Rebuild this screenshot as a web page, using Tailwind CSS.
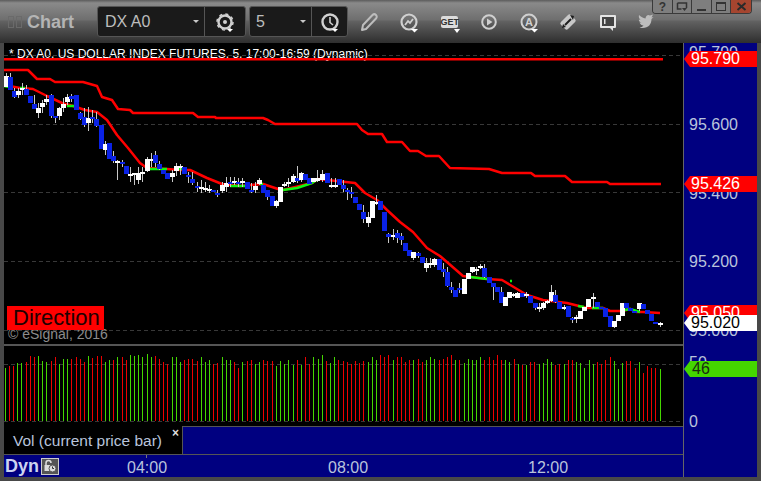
<!DOCTYPE html>
<html lang="en">
<head>
<meta charset="utf-8">
<title>Chart</title>
<script src="https://cdn.jsdelivr.net/npm/@tailwindcss/browser@4"></script>
</head>
<body class="m-0 overflow-hidden bg-[#484848] font-['Liberation_Sans',sans-serif]">
<div class="flex h-[481px] w-[761px] flex-col overflow-hidden bg-[#484848]">

  <!-- title bar -->
  <header class="relative flex h-[43px] shrink-0 items-center bg-[linear-gradient(#5c5c5c_0px,#8a8a8a_3px,#6e6e6e_20px,#626262_21px,#2e2e2e_43px)]">
    <div class="ml-[8px] flex w-[89px] items-center">
      <span class="h-[12px] w-[6px] border border-[#6a6a6a]"></span>
      <span class="ml-[2px] h-[12px] w-[6px] border border-[#6a6a6a]"></span>
      <span class="ml-[5px] text-[18px] font-bold leading-[20px] text-[#b4b4b4]">Chart</span>
    </div>
    <div class="flex h-[31px] w-[149px] items-center rounded-[3px] border border-[#555] bg-[#1a1a1a]">
      <span class="w-[95px] pl-[7px] text-[16px] text-[#bdbdbd]">DX A0</span>
      <span class="h-0 w-0 border-x-[3px] border-t-[3px] border-x-transparent border-t-[#c8c8c8]"></span>
      <span class="ml-[5px] flex h-full w-[40px] items-center justify-center border-l border-[#555]">
        <svg width="24" height="24" viewBox="0 0 24 24"><circle cx="12" cy="12" r="6.5" fill="none" stroke="#d0d0d0" stroke-width="2.4"/><circle cx="12" cy="12" r="8" fill="none" stroke="#d0d0d0" stroke-width="1.5" stroke-dasharray="3 3.3"/><circle cx="12" cy="12" r="2" fill="#d0d0d0"/><path d="M14 19h6l-3 3z" fill="#fff"/></svg>
      </span>
    </div>
    <div class="ml-[3px] flex h-[31px] w-[99px] items-center rounded-[3px] border border-[#555] bg-[#1a1a1a]">
      <span class="w-[51px] pl-[6px] text-[16px] text-[#bdbdbd]">5</span>
      <span class="h-0 w-0 border-x-[3px] border-t-[3px] border-x-transparent border-t-[#c8c8c8]"></span>
      <span class="ml-[5px] flex h-full w-[36px] items-center justify-center border-l border-[#555]">
        <svg width="24" height="24" viewBox="0 0 24 24"><circle cx="12" cy="12" r="7.5" fill="none" stroke="#d0d0d0" stroke-width="2.4"/><path d="M12 7v5.5l3 2.5" fill="none" stroke="#d0d0d0" stroke-width="1.6"/><path d="M14 19h6l-3 3z" fill="#fff"/></svg>
      </span>
    </div>
    <nav class="ml-[1px] flex items-center">
      <span class="flex h-[24px] w-[40px] items-center justify-center"><svg width="24" height="24" viewBox="0 0 24 24"><path d="M5 20l1-5L15.500 5c1-1 2.500-1 3.500 0s1 2.500 0 3.500L9 19z" fill="none" stroke="#bdbdbd" stroke-width="2" stroke-linejoin="round"/></svg></span>
      <span class="flex h-[24px] w-[40px] items-center justify-center"><svg width="24" height="24" viewBox="0 0 24 24"><circle cx="12" cy="12" r="7.500" fill="none" stroke="#d0d0d0" stroke-width="2.200"/><path d="M8 15l3-4 2 2 3-4" fill="none" stroke="#d0d0d0" stroke-width="1.800"/><path d="M14 19h7l-3.500 3.500z" fill="#fff"/></svg></span>
      <span class="relative flex h-[24px] w-[40px] items-center justify-center"><span class="h-[12px] w-[17px] rounded-[2px] bg-[#dcdcdc] text-center text-[9px] font-bold leading-[12px] text-[#333]">GET</span><span class="absolute left-[25px] top-[19px] h-0 w-0 border-x-[3.500px] border-t-[4px] border-x-transparent border-t-white"></span></span>
      <span class="flex h-[24px] w-[40px] items-center justify-center"><svg width="24" height="24" viewBox="0 0 24 24"><circle cx="12" cy="12" r="6.800" fill="none" stroke="#d0d0d0" stroke-width="2"/><path d="M10 8.500v7l5.500-3.500z" fill="#d0d0d0"/></svg></span>
      <span class="relative flex h-[24px] w-[40px] items-center justify-center"><svg width="24" height="24" viewBox="0 0 24 24"><circle cx="12" cy="12" r="7.500" fill="none" stroke="#d0d0d0" stroke-width="2"/><path d="M14 19h7l-3.500 3.500z" fill="#fff"/></svg><span class="absolute left-0 top-[5px] w-full text-center text-[11px] font-bold leading-[14px] text-[#d0d0d0]">A</span></span>
      <span class="flex h-[24px] w-[38px] items-center justify-center"><svg width="24" height="24" viewBox="0 0 24 24"><rect x="5" y="7" width="14" height="10" rx="2" transform="rotate(-45 12 12)" fill="#c8c8c8"/><path d="M14 5l4 1-1 4zM7 14l-1 4 4-1z" fill="#1e1e1e"/><path d="M9 15l6-6" stroke="#1e1e1e" stroke-width="2"/></svg></span>
      <span class="flex h-[24px] w-[42px] items-center justify-center"><svg width="24" height="24" viewBox="0 0 24 24"><path d="M5 5h14a1 1 0 0 1 1 1v11a1 1 0 0 1-1 1h-2v3l-3-3H5a1 1 0 0 1-1-1V6a1 1 0 0 1 1-1z" fill="#e4e4e4"/><rect x="6" y="7" width="12" height="9" fill="#444"/><rect x="8" y="9" width="1.500" height="5" fill="#e4e4e4"/></svg></span>
      <span class="flex h-[24px] w-[34px] items-center justify-center"><svg width="24" height="24" viewBox="0 0 24 24"><path d="M5 5c2 2 4 3 6.500 3.500C11.500 6 14 4 16 5.500l3-1-1.500 3 2-.5-2 2c0 5-3 9-9 9-1 0-2 0-3-.5 2 0 3-1 4-2-2 0-3-1-4-3h2C5 12 4.500 10 5 9.500l1.500.5C5 8.500 4.500 7 5 5z" fill="#bdbdbd"/></svg></span>
    </nav>
    <div class="absolute right-[9px] top-0 flex h-[14px] w-[100px] overflow-hidden rounded-b-[4px] border border-t-0 border-[#3a3a3a] text-[#333]">
      <span class="flex w-[20px] items-center justify-center border-r border-[#3a3a3a] bg-[#7e7e7e] text-[12px] font-bold leading-none">?</span>
      <span class="flex w-[20px] items-center justify-center border-r border-[#3a3a3a] bg-[#7e7e7e]"><svg width="12" height="10" viewBox="0 0 12 10"><path d="M1.500 1h9v5M1.500 1v6h4" fill="none" stroke="#333" stroke-width="1.500"/><path d="M6 6h5l-2.500 3z" fill="#333"/></svg></span>
      <span class="flex w-[20px] items-end justify-center border-r border-[#3a3a3a] bg-[#7e7e7e] pb-[2px]"><span class="h-[2px] w-[9px] bg-[#333]"></span></span>
      <span class="flex w-[20px] items-center justify-center border-r border-[#3a3a3a] bg-[#7e7e7e]"><span class="h-[9px] w-[10px] border border-t-2 border-[#333]"></span></span>
      <span class="flex w-[20px] items-center justify-center bg-[#a5452f]"><svg width="11" height="9" viewBox="0 0 11 9"><path d="M1.500 1l8 7M9.500 1l-8 7" stroke="#2a2a2a" stroke-width="2"/></svg></span>
    </div>
  </header>

  <main class="flex min-h-0 flex-1 pb-[4px] pl-[4px] pr-[4px]">
    <section class="flex w-[679px] flex-col">
      <!-- price pane -->
      <div class="relative h-[301px] shrink-0 bg-black">
        <p class="absolute left-[5px] top-[4px] whitespace-nowrap text-[12px] leading-[14px] text-white">* DX A0, US DOLLAR INDEX FUTURES, 5, 17:00-16:59 (Dynamic)</p>
        <svg id="price" class="absolute left-0 top-0" width="679" height="301" viewBox="4 43 679 301"></svg>
        <p class="absolute left-[4px] top-[283px] whitespace-nowrap text-[14px] leading-[16px] text-[#8c8c8c]">© eSignal, 2016</p>
        <p class="absolute left-[3px] top-[263px] h-[24px] w-[97px] overflow-hidden whitespace-nowrap bg-[#ff0000] pl-[6px] text-[22px] leading-[24px] text-[#200000]">Direction</p>
      </div>
      <div class="h-[2px] shrink-0 bg-[#555]"></div>
      <!-- volume pane -->
      <div class="h-[80px] shrink-0 bg-black">
        <svg id="vol" class="block" width="679" height="80" viewBox="4 346 679 80"></svg>
      </div>
      <!-- tab row -->
      <div class="flex h-[29px] shrink-0 border-b border-[#555] bg-black">
        <div class="relative w-[178px] border-t border-black pl-[9px] pt-[4px] text-[15.500px] leading-[20px] text-[#b9c4dc]">Vol (current price bar)<span class="absolute left-[168px] top-[-1px] text-[12px] font-bold leading-[14px] text-[#ddd]">×</span></div>
        <div class="flex-1 border-l border-t border-[#555] bg-[#000080]"></div>
      </div>
      <!-- time axis -->
      <div class="relative flex flex-1 items-center bg-[#000080]">
        <span class="ml-[1px] text-[18px] font-bold leading-[20px] text-[#ccd4f0]">Dyn</span>
        <span class="ml-[2px] flex h-[17px] w-[18px] items-center justify-center border border-[#ccc] bg-[#555]"><svg width="14" height="14" viewBox="0 0 14 14"><path d="M3 6V4a2.500 2.500 0 0 1 5 0" fill="none" stroke="#ddd" stroke-width="1.500"/><rect x="1.500" y="6" width="7" height="6" fill="#ddd"/><circle cx="9.500" cy="9.500" r="3.500" fill="#ddd" stroke="#555"/><path d="M9.500 7.500v2h1.500" fill="none" stroke="#333"/></svg></span>
        <span class="absolute left-[142px] top-0 h-[3px] w-px bg-[#777]"></span>
        <span class="absolute left-[123px] top-[3px] w-[40px] text-center text-[16px] leading-[20px] text-[#b9c4dc]">04:00</span>
        <span class="absolute left-[324px] top-[3px] w-[40px] text-center text-[16px] leading-[20px] text-[#b9c4dc]">08:00</span>
        <span class="absolute left-[524px] top-[3px] w-[40px] text-center text-[16px] leading-[20px] text-[#b9c4dc]">12:00</span>
      </div>
    </section>

    <!-- price axis -->
    <aside class="relative w-[74px] shrink-0 border-l border-[#666] bg-[#000080] text-[16px] leading-[16px] text-[#b9c4dc]">
      <span class="absolute left-[5px] top-[2px]">95.790</span>
      <span class="absolute left-[5px] top-[74px]">95.600</span>
      <span class="absolute left-[5px] top-[143px]">95.400</span>
      <span class="absolute left-[5px] top-[211px]">95.200</span>
      <span class="absolute left-[5px] top-[280px]">95.000</span>
      <span class="absolute left-[5px] top-[312px]">50</span>
      <span class="absolute left-[5px] top-[371px]">0</span>
      <span class="absolute left-0 top-[8px] h-[16px] w-[73px] bg-[#ff0000] pl-[7px] text-white [clip-path:polygon(0_50%,6px_0,100%_0,100%_100%,6px_100%)]">95.790</span>
      <span class="absolute left-0 top-[133px] h-[16px] w-[73px] bg-[#ff0000] pl-[7px] text-white [clip-path:polygon(0_50%,6px_0,100%_0,100%_100%,6px_100%)]">95.426</span>
      <span class="absolute left-0 top-[262px] h-[16px] w-[73px] bg-[#ff0000] pl-[7px] text-white [clip-path:polygon(0_50%,6px_0,100%_0,100%_100%,6px_100%)]">95.050</span>
      <span class="absolute left-0 top-[272px] h-[16px] w-[73px] bg-white pl-[7px] text-black [clip-path:polygon(0_50%,6px_0,100%_0,100%_100%,6px_100%)]">95.020</span>
      <span class="absolute left-0 top-[318px] h-[16px] w-[73px] bg-[#44d600] pl-[8px] text-[#1a2a10] [clip-path:polygon(0_50%,6px_0,100%_0,100%_100%,6px_100%)]">46</span>
    </aside>
  </main>
</div>

<script>
const GRID = '#383838', RED = '#ff0000', GREEN = '#10f510', BLUE = '#0a22e6';
const poly = (pts, color, w) => `<polyline points="${pts}" fill="none" stroke="${color}" stroke-width="${w}" stroke-linejoin="round"/>`;
const dash = y => `<line x1="4" x2="683" y1="${y}.5" y2="${y}.5" stroke="${GRID}" stroke-dasharray="4 3"/>`;

// candles: [type, x in crop, body top, body bottom, wick top, wick bottom], in 3x crop coordinates
const groups = [
 [0,70,[['w',17,18,50,9,50],['b',29,22,60,9,60],['b',41,63,80,55,84],['w',53,63,75,55,85],['w',65,53,60,40,75],['b',77,57,75,45,75],['b',91,78,100,78,100],['b',103,102,117,75,118],['w',115,113,129,100,143],['w',127,98,111,90,130],['w',139,86,96,75,105],['b',154,75,137,72,145],['b',166,137,145,137,160],['w',178,113,138,110,150],['w',190,102,114,85,125],['w',202,82,96,72,105],['b',214,78,88,72,95],['b',229,75,120,75,120],['b',241,130,147,125,150],['b',253,140,165,115,170],['w',265,143,160,112,182],['b',277,140,145,120,160],['b',289,148,168,125,170],['b',304,165,237,165,237],['w',316,222,240,213,255],['b',328,220,267,220,267],['b',340,258,273,243,280],['w',352,272,279,270,330],['b',367,276,281,270,290],['b',379,288,311,288,311],['w',391,312,318,292,335],['w',403,310,316,310,345],['w',415,310,330,292,342],['w',427,307,312,290,335],['w',442,267,302,262,307],['w',454,267,272,250,290],['b',466,255,280,243,292],['b',478,282,297,272,300],['b',490,300,312,300,312],['b',502,310,328,310,328],['w',517,308,321,300,335],['w',529,288,303,280,318],['w',541,288,292,282,315],['b',553,292,312,292,312],['b',565,315,320,305,340],['b',577,327,340,305,345],['b',591,347,351,335,365],['w',604,351,355,330,370],['w',616,355,360,335,365],['w',628,358,362,345,368],['b',640,360,366,360,366],['b',652,369,374,360,380],['w',667,346,363,335,368],['w',679,340,350,320,365],['b',691,335,341,322,350],['w',703,332,340,320,345],['b',715,335,340,325,350]]],
 [240,150,[['w',7,93,98,85,110],['b',22,95,118,95,118],['b',34,120,124,100,130],['w',46,108,120,95,130],['w',58,91,102,85,105],['b',70,106,130,106,130],['b',82,120,140,120,150],['b',97,138,167,138,167],['w',109,153,168,150,175],['w',121,110,156,110,156],['w',133,103,108,95,110],['w',145,96,102,85,110],['w',159,78,96,72,100],['b',172,84,92,48,100],['w',184,70,90,65,95],['b',196,72,90,72,90],['b',208,84,102,84,102],['w',220,85,96,85,96],['w',232,84,92,60,95],['w',245,72,90,60,95],['b',260,70,100,70,100],['w',272,106,112,85,115],['w',284,105,108,85,115],['b',296,88,105,88,105],['b',310,105,117,90,125],['b',322,120,125,115,150],['b',334,125,130,110,145],['b',346,142,160,142,160],['b',358,162,180,162,180],['b',370,186,208,165,218],['w',385,200,218,185,230],['w',397,153,204,153,204],['w',409,155,160,135,165],['b',421,153,180,153,180],['b',433,185,243,185,243],['b',445,252,262,250,280],['w',459,254,260,238,270],['b',472,250,263,240,280],['b',484,258,270,250,285],['b',496,280,303,280,303],['b',508,300,317,300,317],['w',520,307,323,305,330],['b',535,310,318,305,325],['b',547,322,338,322,338],['w',559,340,353,325,365],['w',571,340,346,325,355],['w',583,327,345,325,350],['b',598,327,359,327,359],['b',610,357,365,340,380],['b',622,366,408,350,410],['b',634,412,420,395,430],['b',646,420,440,420,440],['b',658,414,420,400,430]]],
 [440,250,[['w',73,88,131,88,131],['w',85,68,88,68,88],['w',97,52,66,52,70],['w',109,58,63,50,75],['w',121,48,52,42,58],['b',133,55,81,42,85],['b',148,80,98,80,98],['b',160,100,110,100,150],['b',172,110,125,110,125],['b',184,125,160,110,160],['w',196,142,167,142,167],['w',208,127,143,127,143],['w',220,133,137,130,140],['w',232,130,143,125,145],['b',245,128,140,128,140],['w',257,133,138,125,145],['b',270,138,160,138,160],['b',284,160,175,160,180],['w',296,172,176,160,185],['w',308,160,175,155,180],['w',320,152,158,150,162],['w',332,127,152,105,155],['b',345,135,155,120,160],['b',357,155,177,155,177],['w',372,170,175,165,180],['b',384,168,200,168,200],['b',396,203,209,200,220],['w',408,200,208,195,220],['w',420,182,206,182,206],['w',432,172,182,172,182],['w',444,147,172,147,172],['w',459,142,147,130,175],['b',472,155,172,155,172],['b',484,172,178,172,178],['b',496,175,200,175,200],['b',511,198,230,198,230],['w',523,212,230,212,233],['w',535,195,212,195,212],['w',547,160,197,160,197],['b',559,158,175,158,175],['b',571,175,183,175,183],['b',583,182,187,182,187],['w',598,160,178,160,184],['b',610,162,178,162,178],['b',622,180,192,180,192],['b',634,192,213,192,213],['b',646,215,220,215,222],['w',660,220,223,215,230]]]
];

let wicks = '', bodies = '';
for (const [ox, oy, list] of groups) for (const [t, zx, a, b, c, d] of list) {
  const cx = Math.round(ox + zx / 3), top = Math.round(oy + a / 3), bot = Math.round(oy + b / 3), wt = Math.round(oy + c / 3), wb = Math.round(oy + d / 3);
  if (wb > wt) wicks += `<rect x="${cx}" y="${wt}" width="1" height="${wb - wt}" fill="#c8c8c8"/>`;
  bodies += `<rect x="${cx - 2}" y="${top}" width="5" height="${Math.max(bot - top, 2)}" fill="${t === 'w' ? '#fff' : BLUE}"/>`;
}

const upper = '4,70 28,70 37,79 50,79 55,82 83,82 97,86 102,97 112,100 118,109 130,110 133,113 193,113 198,117 215,117 216,118 263,118 268,120 275,124 357,124 362,130 368,134 382,134 387,142 402,142 410,151 418,151 426,156 439,156 450,168 489,169 502,173 531,173 535,176 565,176 572,182 607,182 610,184 661,184';
const ma = '4,85 20,88 33,89 47,96 62,103 73,106 85,110 97,112 107,120 117,135 128,148 140,163 147,168 167,169 180,170 190,170 207,178 222,184 240,186 263,184 278,189 283,190 312,183 318,179 355,183 365,193 377,200 387,210 400,222 413,232 427,248 440,256 463,276 487,279 502,280 527,295 543,300 567,303 587,308 603,308 610,311 622,311 630,309 637,312 643,312 660,313';
const greens = ['4,86 9,87', '20,88 25,88', '67,106 74,106', '150,169 167,169', '178,169 183,169', '230,186 245,186', '260,184 263,184', '283,190 297,188 312,183 318,179', '470,277 487,279', '510,281 512,281', '578,306 584,307', '592,308 603,308', '625,310 630,309 640,312'];

document.getElementById('price').innerHTML =
  [55, 124, 192, 261, 330].map(dash).join('') +
  `<rect x="4" y="58" width="659" height="2.500" fill="${RED}"/>` +
  poly(upper, RED, 2.5) + poly(ma, RED, 2.5) +
  greens.map(p => poly(p, GREEN, 2.5)).join('') + wicks + bodies;

// volume bars: [r|g, x in crop, top in crop], 3x crop coordinates
const vols = [
 [0,300,'g16,205 r28,198 r40,197 g52,190 g64,190 r79,187 r91,168 r103,172 g115,168 g127,183 g139,185 r154,182 r166,172 g178,192 g190,178 g202,178 r214,178 r229,172 r241,178 r253,186 g265,168 r277,175 r290,168 r304,168 g316,186 g328,180 r340,180 g352,170 r367,172 r379,180 g391,165 g403,167 g415,165 g427,170 g442,162 g454,170 r466,168 r478,178 r490,186 r502,192 g517,170 g529,170 g541,186 r553,180 r565,178 r577,178 r591,183 g604,172 g616,186 g628,180 r640,192 r652,190 g667,170 g679,180 g691,180 r703,186 r715,205'],
 [240,350,'g7,37 r22,33 r34,30 g46,42 g58,37 r70,30 r82,33 r97,33 g109,48 g121,33 g133,42 g145,30 g160,45 r172,30 g184,45 r196,21 r208,42 g220,21 g235,27 g247,15 r259,33 g271,39 g283,21 r295,30 r310,33 r322,36 r334,42 r346,33 r358,39 r370,33 g385,36 g397,21 g409,30 r421,15 r433,21 r445,15 g460,30 r472,21 r484,21 r496,36 r508,30 g520,30 r535,27 r547,36 g559,30 g571,21 g583,27 r598,30 r610,27 r622,21 r634,15 g646,30 r658,30'],
 [460,350,'g13,39 g25,27 g37,30 g49,30 g61,21 r73,30 r88,21 r100,30 r112,15 r124,30 g136,30 g148,36 r163,27 g175,42 r187,45 g199,45 r211,36 r223,36 g238,42 g250,39 g262,27 g274,36 r286,45 r298,42 g313,42 r325,30 r337,30 g349,36 g361,39 g373,54 g388,30 g400,42 r412,36 r424,42 r436,30 r451,21 g463,33 g475,57 g487,39 r499,33 r511,33 r526,54 g538,36 r550,69 r562,48 r574,54 r586,54 g601,57']
];
let bars = '';
for (const [ox, oy, s] of vols) for (const v of s.split(' ')) {
  const [x, t] = v.slice(1).split(',').map(Number);
  const cx = Math.round(ox + x / 3), top = Math.round(oy + t / 3);
  bars += `<rect x="${cx}" y="${top}" width="1" height="${421 - top}" fill="${v[0] === 'g' ? '#44d600' : '#ee0000'}"/>`;
}
document.getElementById('vol').innerHTML = dash(364) + dash(421) + bars;
</script>
</body>
</html>
